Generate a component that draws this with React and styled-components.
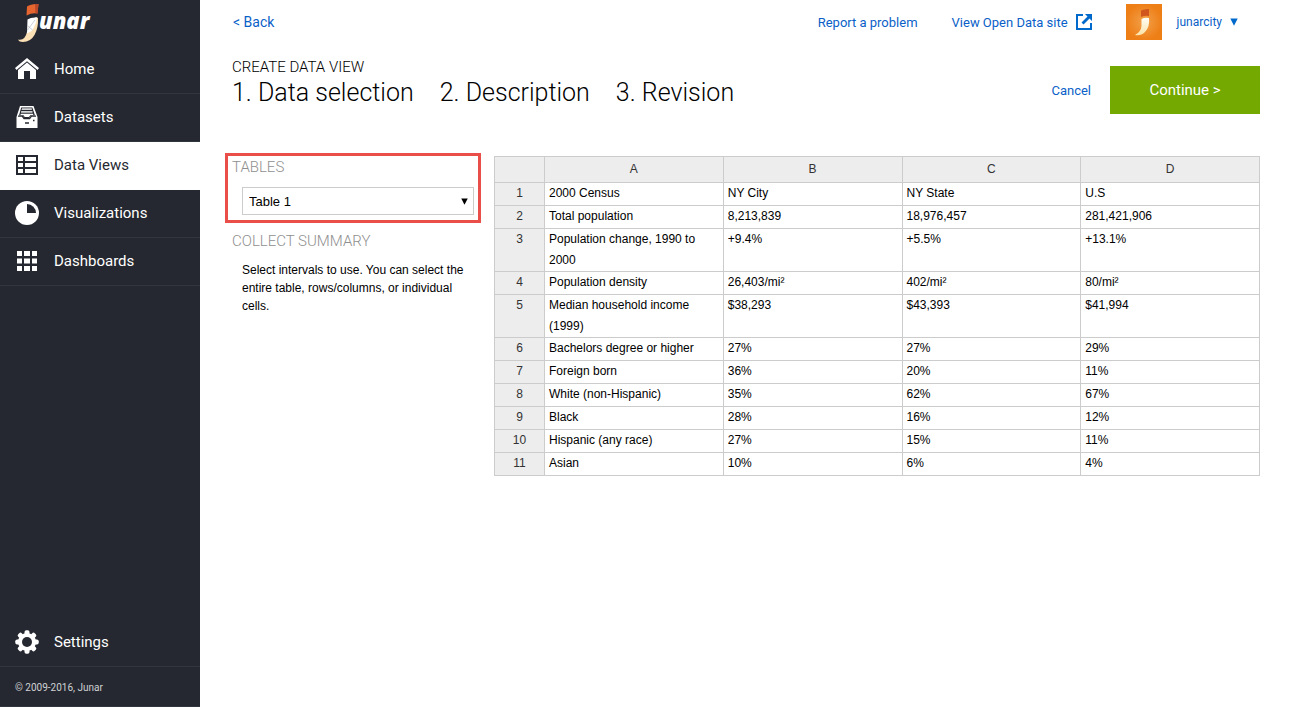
import React from "react";
import styled, { createGlobalStyle, css } from "styled-components";

const GlobalStyle = createGlobalStyle`
  *, *::before, *::after { box-sizing: border-box; }
  body {
    margin: 0;
    background: #fff;
    color: #000;
    font-family: Roboto, "Liberation Sans", sans-serif;
    font-size: 13px;
  }
  a { color: #0a5fc8; text-decoration: none; }
`;

const Shell = styled.div`
  display: flex;
  min-height: 100vh;
`;

const Sidebar = styled.aside`
  display: flex;
  flex-direction: column;
  flex: 0 0 200px;
  background: #252830;
`;

const Brand = styled.a`
  display: block;
  height: 46px;
  padding-left: 16px;
  svg { display: block; }
`;

const Nav = styled.nav`
  display: flex;
  flex-direction: column;
`;

const NavItem = styled.a`
  display: flex;
  align-items: center;
  gap: 15px;
  height: 48px;
  padding: 0 0 2px 15px;
  border-bottom: 1px solid #31353e;
  color: #fff;
  font-size: 15px;
  svg { display: block; }
  ${({ $active }) =>
    $active &&
    css`
      background: #fff;
      border-color: #fff;
      color: #252830;
    `}
`;

const SidebarFooter = styled.footer`
  margin-top: auto;
`;

const Copyright = styled.p`
  margin: 0;
  padding: 3px 0 0 15px;
  border-bottom: 1px solid #31353e;
  color: #d0d1d4;
  font-size: 10px;
  line-height: 36px;
`;

const Main = styled.main`
  flex: 1;
  min-width: 0;
`;

const TopBar = styled.header`
  display: flex;
  align-items: center;
  justify-content: space-between;
  height: 44px;
  padding: 0 54px 0 33px;
`;

const BackLink = styled.a`
  font-size: 14px;
`;

const TopLinks = styled.div`
  display: flex;
  align-items: center;
  gap: 34px;
`;

const SiteLink = styled.a`
  display: flex;
  align-items: center;
  gap: 8px;
`;

const AccountButton = styled.button`
  display: flex;
  align-items: center;
  gap: 15px;
  padding: 0;
  border: 0;
  background: none;
  color: #0a5fc8;
  font: 400 12px Roboto, sans-serif;
  cursor: pointer;
  svg { display: block; }
`;

const AccountName = styled.span`
  display: flex;
  align-items: center;
  gap: 8px;
`;

const TitleBar = styled.div`
  display: flex;
  align-items: flex-end;
  justify-content: space-between;
  padding: 13px 32px 0;
`;

const Heading = styled.h1`
  margin: 0;
  font-size: 15px;
  font-weight: 300;
  line-height: 20px;
`;

const Steps = styled.ol`
  display: flex;
  gap: 26px;
  margin: 0;
  padding: 0 0 5px;
  list-style: none;
  font-size: 25px;
  font-weight: 300;
  line-height: 32px;
`;

const Actions = styled.div`
  display: flex;
  align-items: center;
  gap: 19px;
`;

const ContinueButton = styled.button`
  width: 150px;
  height: 48px;
  border: 0;
  background: #73a900;
  color: #fff;
  font: 400 15px Roboto, sans-serif;
  cursor: pointer;
`;

const Workspace = styled.div`
  display: flex;
  align-items: flex-start;
  gap: 13px;
  padding: 39px 32px 32px 25px;
`;

const Panel = styled.div`
  flex: 0 0 256px;
`;

const TablePicker = styled.section`
  padding: 1px 4px 5px;
  border: 3px solid #ea4e49;
`;

const Summary = styled.section`
  padding: 8px 7px 0;
`;

const PanelTitle = styled.h2`
  display: block;
  margin: 0;
  color: #8f8f8f;
  font-size: 15px;
  font-weight: 300;
  line-height: 20px;
`;

const SelectWrap = styled.div`
  position: relative;
  margin: 10px 0 0 10px;
  svg {
    position: absolute;
    top: 11px;
    right: 6px;
    pointer-events: none;
  }
`;

const Select = styled.select`
  display: block;
  width: 100%;
  height: 28px;
  padding: 0 6px;
  border: 1px solid #ccc;
  border-radius: 0;
  background: #fff;
  color: #000;
  font: 13px "Liberation Sans", sans-serif;
  appearance: none;
`;

const Hint = styled.p`
  margin: 10px 0 0;
  padding-left: 10px;
  font: 12px/18px "Liberation Sans", sans-serif;
`;

const Grid = styled.table`
  flex: 1;
  width: 100%;
  min-width: 0;
  margin-top: 3px;
  border-collapse: collapse;
  table-layout: fixed;
  font: 12px/21px "Liberation Sans", sans-serif;
  th, td { border: 1px solid #ccc; }
  tbody tr { height: 23px; }
`;

const HeadCell = styled.th`
  width: ${({ $corner }) => ($corner ? "50px" : "auto")};
  padding: 0;
  background: #ededed;
  color: #333;
  font-weight: 400;
  line-height: 25px;
`;

const RowNumber = styled.th`
  padding: 0;
  background: #ededed;
  color: #333;
  font-weight: 400;
  vertical-align: top;
`;

const Cell = styled.td`
  padding: 0 4px;
  vertical-align: top;
`;

const Junar = () => (
  <svg width="80" height="44" viewBox="0 0 80 44" role="img" aria-label="Junar">
    <path d="M11 6.500 Q15 3.500 22.500 4 L21.500 13.500 Q16 12.500 10.500 15.500Z" fill="#e7652f" />
    <path d="M19 4 Q21 3.800 22.500 4 L21.500 13.500 L19.500 13.300Z" fill="#b9492a" />
    <path d="M19 17.500 Q21 17 22 18 Q22.500 28 18.500 35 Q14.500 42 7 42 Q3 42 2 39.500 Q9 41 11 32 L17 27Z" fill="#fbdfb5" />
    <path d="M11.500 19.500 Q15 17 21 17.500 Q20.500 23 18 27 Q16.500 31.500 11 33.500Z" fill="#fff" />
    <path d="M11.500 30 L19 20 M11.500 25.500 L16.500 30" stroke="#a9adb5" strokeWidth="0.600" fill="none" />
    <text x="23" y="29" fill="#fff" fontFamily="Open Sans" fontSize="22" fontStyle="italic" fontWeight="800">unar</text>
  </svg>
);

const HomeIcon = () => (
  <svg width="24" height="22" viewBox="0 0 24 22" fill="#fff">
    <path d="M12 0 L24 10 L22.500 12 L12 3.200 L1.500 12 L0 10Z" />
    <path d="M3 12 L12 4.500 L21 12 V21 H15 V13 H9 V21 H3Z" />
  </svg>
);

const DatasetsIcon = () => (
  <svg width="24" height="24" viewBox="0 0 24 24">
    <path d="M5 1 H18.500 L22.500 12 V23 H1.500 V12Z" fill="#fff" />
    <path d="M6.200 2.500 H17.300 L20 10.500 H16 L14.300 13 H9.300 L7.600 10.500 H4Z" fill="#252830" />
    <path d="M7 3.300 H16.800 V5 H6.500Z" fill="#d0d2d4" />
    <path d="M6.200 6 H17.500 V7.700 H6Z" fill="#d0d2d4" />
    <path d="M5.700 8.700 H18.200 V10 H15.600 L14 12 H9.800 L8.200 10 H5.500Z" fill="#fff" />
    <path d="M3 11.200 H7.200 L9 13.600 H14.600 L16.400 11.200 H21" fill="none" stroke="#252830" strokeWidth="1.300" />
    <path d="M10 18 H14 M18 15.500 H19.500" stroke="#252830" strokeWidth="1.500" />
  </svg>
);

const DataViewsIcon = () => (
  <svg width="24" height="22" viewBox="0 0 24 22">
    <path d="M1 1 H23 V21 H1Z" fill="#252830" />
    <path d="M3 3 H8 V7 H3Z M10 3 H21 V7 H10Z M3 9 H8 V13 H3Z M10 9 H21 V13 H10Z M3 15 H8 V19 H3Z M10 15 H21 V19 H10Z" fill="#fff" />
  </svg>
);

const PieIcon = () => (
  <svg width="24" height="24" viewBox="0 0 24 24">
    <circle cx="12" cy="12" r="12" fill="#fff" />
    <path d="M12 3 A9 9 0 0 1 21 12 H12Z" fill="#252830" />
  </svg>
);

const DashboardsIcon = () => (
  <svg width="24" height="22" viewBox="0 0 24 22">
    <path d="M2 1H7V6H2ZM9 1H15V6H9ZM17 1H22V6H17ZM2 8.500H7V13.500H2ZM9 8.500H15V13.500H9ZM17 8.500H22V13.500H17ZM2 16H7V21H2ZM9 16H15V21H9ZM17 16H22V21H17Z" fill="#fff" />
  </svg>
);

const GearIcon = () => (
  <svg width="24" height="24" viewBox="0 0 24 24">
    <g fill="#fff">
      {[0, 45, 90, 135].map((a) => (
        <rect key={a} x="9.500" y="0.300" width="5" height="23.400" rx="1.800" transform={`rotate(${a} 12 12)`} />
      ))}
      <circle cx="12" cy="12" r="9" />
    </g>
    <circle cx="12" cy="12" r="5" fill="#252830" />
  </svg>
);

const ExternalIcon = () => (
  <svg width="16" height="16" viewBox="0 0 16 16" fill="#0069cc">
    <path d="M0 0H7V2H2V14H14V9H16V16H0Z" />
    <path d="M9 0H16V7L13.500 4.500L7.500 10.500L5.500 8.500L11.500 2.500Z" />
  </svg>
);

const Avatar = () => (
  <svg width="36" height="36" viewBox="0 0 36 36" aria-hidden="true">
    <defs>
      <radialGradient id="glow">
        <stop offset="0" stopColor="#f2a04a" />
        <stop offset="1" stopColor="#ee7f17" />
      </radialGradient>
      <linearGradient id="tusk" x1="0" y1="0" x2="0" y2="1">
        <stop offset="0" stopColor="#fffdf5" />
        <stop offset="1" stopColor="#fbe3a8" />
      </linearGradient>
    </defs>
    <rect width="36" height="36" fill="url(#glow)" />
    <path d="M15 6.500 Q19 4.500 23 5 V12 Q19 11 15 13Z" fill="#d0561d" />
    <path d="M15.500 15 Q19 13 23 14 Q24 23 19 28 Q15 32 9 31 Q15 28 15.500 22Z" fill="url(#tusk)" />
  </svg>
);

const Caret = ({ size, color }) => (
  <svg width={size} height={size} viewBox="0 0 8 8" aria-hidden="true">
    <path d="M0.300 0.500H7.700L4 7.800Z" fill={color} />
  </svg>
);

const navItems = [
  { label: "Home", Icon: HomeIcon },
  { label: "Datasets", Icon: DatasetsIcon },
  { label: "Data Views", Icon: DataViewsIcon, active: true },
  { label: "Visualizations", Icon: PieIcon },
  { label: "Dashboards", Icon: DashboardsIcon },
];

const columns = ["A", "B", "C", "D"];

const rows = [
  ["2000 Census", "NY City", "NY State", "U.S"],
  ["Total population", "8,213,839", "18,976,457", "281,421,906"],
  ["Population change, 1990 to 2000", "+9.4%", "+5.5%", "+13.1%"],
  ["Population density", "26,403/mi²", "402/mi²", "80/mi²"],
  ["Median household income (1999)", "$38,293", "$43,393", "$41,994"],
  ["Bachelors degree or higher", "27%", "27%", "29%"],
  ["Foreign born", "36%", "20%", "11%"],
  ["White (non-Hispanic)", "35%", "62%", "67%"],
  ["Black", "28%", "16%", "12%"],
  ["Hispanic (any race)", "27%", "15%", "11%"],
  ["Asian", "10%", "6%", "4%"],
];

export default function App() {
  return (
    <>
      <GlobalStyle />
      <Shell>
        <Sidebar>
          <Brand href="#"><Junar /></Brand>
          <Nav>
            {navItems.map(({ label, Icon, active }) => (
              <NavItem key={label} href="#" $active={active} aria-current={active ? "page" : undefined}>
                <Icon />
                {label}
              </NavItem>
            ))}
          </Nav>
          <SidebarFooter>
            <NavItem href="#"><GearIcon />Settings</NavItem>
            <Copyright>© 2009-2016, Junar</Copyright>
          </SidebarFooter>
        </Sidebar>
        <Main>
          <TopBar>
            <BackLink href="#">&lt; Back</BackLink>
            <TopLinks>
              <a href="#">Report a problem</a>
              <SiteLink href="#">View Open Data site <ExternalIcon /></SiteLink>
              <AccountButton type="button">
                <Avatar />
                <AccountName>junarcity <Caret size={8} color="#0069cc" /></AccountName>
              </AccountButton>
            </TopLinks>
          </TopBar>
          <TitleBar>
            <div>
              <Heading>CREATE DATA VIEW</Heading>
              <Steps>
                <li>1. Data selection</li>
                <li>2. Description</li>
                <li>3. Revision</li>
              </Steps>
            </div>
            <Actions>
              <a href="#">Cancel</a>
              <ContinueButton type="button">Continue &gt;</ContinueButton>
            </Actions>
          </TitleBar>
          <Workspace>
            <Panel>
              <TablePicker>
                <PanelTitle as="label" htmlFor="table-select">TABLES</PanelTitle>
                <SelectWrap>
                  <Select id="table-select" defaultValue="1">
                    <option value="1">Table 1</option>
                  </Select>
                  <Caret size={7} color="#000" />
                </SelectWrap>
              </TablePicker>
              <Summary>
                <PanelTitle>COLLECT SUMMARY</PanelTitle>
                <Hint>Select intervals to use. You can select the entire table, rows/columns, or individual cells.</Hint>
              </Summary>
            </Panel>
            <Grid>
              <thead>
                <tr>
                  <HeadCell $corner />
                  {columns.map((c) => <HeadCell key={c} scope="col">{c}</HeadCell>)}
                </tr>
              </thead>
              <tbody>
                {rows.map((row, i) => (
                  <tr key={row[0]}>
                    <RowNumber scope="row">{i + 1}</RowNumber>
                    {row.map((value, j) => <Cell key={columns[j]}>{value}</Cell>)}
                  </tr>
                ))}
              </tbody>
            </Grid>
          </Workspace>
        </Main>
      </Shell>
    </>
  );
}
